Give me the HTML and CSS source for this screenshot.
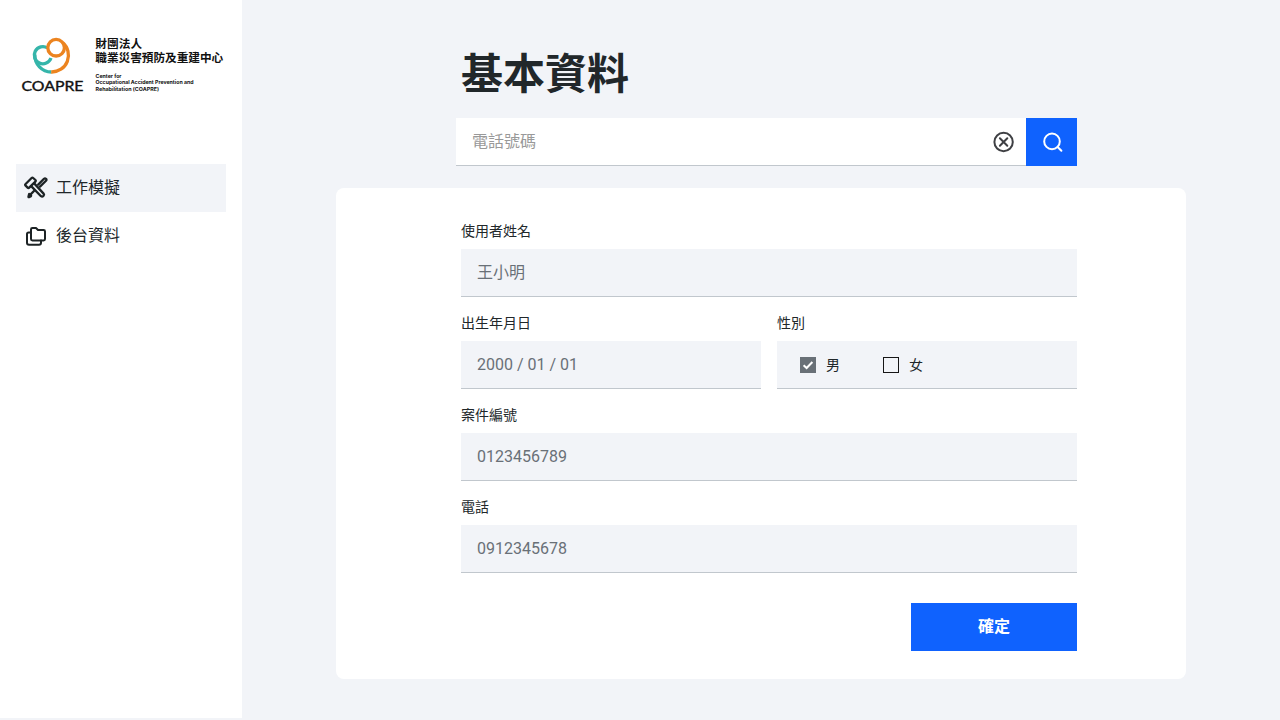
FILE: index.html
```
<!DOCTYPE html>
<html lang="zh-Hant">
<head>
    <meta charset="UTF-8">
    <meta name="viewport" content="width=device-width, initial-scale=1.0">
    <title>基本資料</title>
    <link rel="stylesheet" href="styles.css">
</head>
<body>
    <aside class="sidebar">
        <svg class="logo" width="242" height="110" viewBox="0 0 242 110">
            <g fill="none" stroke-width="3.3">
                <path class="teal" d="M47.5 47.9A8.6 8.6 0 1 0 51 58"/>
                <path class="teal" d="M34.9 54.5A16.7 16.7 0 0 0 51.4 72"/>
                <path class="orange" d="M51.2 72A16.7 16.7 0 0 0 62.6 42.6"/>
                <circle class="orange" cx="56.1" cy="47.7" r="8.3"/>
            </g>
            <text class="logo-name" x="21.5" y="91" textLength="62" lengthAdjust="spacingAndGlyphs">COAPRE</text>
            <text class="logo-zh" x="95.3" y="48.2" textLength="47">財團法人</text>
            <text class="logo-zh" x="95.3" y="62.2" textLength="128">職業災害預防及重建中心</text>
            <text class="logo-en" x="95.5" y="77.5" textLength="26" lengthAdjust="spacingAndGlyphs">Center for</text>
            <text class="logo-en" x="95.5" y="84.4" textLength="98" lengthAdjust="spacingAndGlyphs">Occupational Accident Prevention and</text>
            <text class="logo-en" x="95.5" y="91.2" textLength="63.5" lengthAdjust="spacingAndGlyphs">Rehabilitation (COAPRE)</text>
        </svg>
        <ul class="menu">
            <li class="active">
                <svg width="24" height="24" viewBox="0 0 24 24" fill="none" stroke="#1d2325" stroke-width="2.3" stroke-linejoin="round" stroke-linecap="round">
                    <path d="M1.6 8Q.8 8.8 1.6 9.6L3.6 11.6Q4.4 12.4 5.2 11.6L11.4 5.6Q12.2 4.8 11.4 4L9.2 2Q8.4 1.2 7.6 2Z"/>
                    <path d="M7.4 10.4L17 20.2Q18.2 21.2 19.4 20Q20.6 18.8 19.6 17.6L10.2 7.4"/>
                    <path d="M14.2 8.6L20 2.8Q21 1.9 22 2.8Q23 3.8 22 4.8L16 10.6"/>
                    <path d="M10.2 14.8L6.4 18.6"/>
                    <path d="M5.4 18.4L6.8 19.8L4.8 20.8Z" stroke-width="3"/>
                </svg>
                <a>工作模擬</a>
            </li>
            <li>
                <svg width="24" height="24" viewBox="0 0 24 24" fill="none" stroke="#1d2325" stroke-width="2" stroke-linejoin="round" stroke-linecap="round">
                    <path d="M7 5.4Q7 4 8.4 4H12L14 6H19.6Q21 6 21 7.4V15Q21 16.4 19.6 16.4H8.4Q7 16.4 7 15Z"/>
                    <path d="M7 8.4H4.6Q3 8.4 3 10V18.8Q3 20.8 5 20.8H15Q17 20.8 17 18.8V16.4"/>
                </svg>
                <a>後台資料</a>
            </li>
        </ul>
    </aside>

    <main>
        <h1>基本資料</h1>
        <div class="search">
            <span class="search-text">電話號碼</span>
            <svg class="clear" width="22" height="22" viewBox="0 0 22 22" fill="none" stroke="#3f4044" stroke-width="2" stroke-linecap="round">
                <circle cx="10.6" cy="11" r="9.2"/>
                <path d="M6.9 7.3L14.3 14.7M14.3 7.3L6.9 14.7"/>
            </svg>
            <button class="search-btn">
                <svg width="24" height="24" viewBox="0 0 24 24" fill="none" stroke="#fff" stroke-width="2" stroke-linecap="round">
                    <circle cx="11" cy="11.4" r="7.8"/>
                    <path d="M16.6 17L20.4 20.8"/>
                </svg>
            </button>
        </div>

        <div class="card">
            <div class="field">
                <label>使用者姓名</label>
                <div class="box name">王小明</div>
            </div>
            <div class="row">
                <div class="field">
                    <label>出生年月日</label>
                    <div class="box">2000 / 01 / 01</div>
                </div>
                <div class="field">
                    <label>性別</label>
                    <div class="box gender">
                        <span class="check checked">
                            <svg width="16" height="16" viewBox="0 0 16 16" fill="none" stroke="#fff" stroke-width="2">
                                <path d="M3.6 8.2L6.6 11L12.4 5"/>
                            </svg>
                        </span>
                        <span class="option">男</span>
                        <span class="check"></span>
                        <span class="option">女</span>
                    </div>
                </div>
            </div>
            <div class="field">
                <label>案件編號</label>
                <div class="box">0123456789</div>
            </div>
            <div class="field">
                <label>電話</label>
                <div class="box">0912345678</div>
            </div>
            <button class="submit">確定</button>
        </div>
    </main>
</body>
</html>
```
FILE: styles.css
```
* {
    margin: 0;
    padding: 0;
    box-sizing: border-box;
}
body {
    display: flex;
    height: 720px;
    overflow: hidden;
    background-color: #f2f4f8;
    color: #21272a;
    font-family: Roboto, "Noto Sans CJK TC", sans-serif;
}
button {
    border: none;
    background-color: #0f62fe;
    color: white;
    font-family: inherit;
}
.sidebar {
    width: 242px;
    height: 718px;
    background-color: white;
}
.logo {
    display: block;
}
.teal {
    stroke: #35b5aa;
}
.orange {
    stroke: #ec8420;
}
.logo-name {
    font-family: Lato, sans-serif;
    font-size: 14px;
    fill: #111;
    stroke: #111;
    stroke-width: 0.4px;
}
.logo-zh {
    font-family: "Noto Sans CJK TC", sans-serif;
    font-size: 11.7px;
    font-weight: bold;
    fill: #111;
}
.logo-en {
    font-family: Inter, sans-serif;
    font-size: 5px;
    font-weight: bold;
    fill: #111;
}
.menu {
    list-style-type: none;
    margin: 54px 16px 0 16px;
}
.menu li {
    display: flex;
    align-items: center;
    gap: 8px;
    height: 48px;
    padding: 0 8px;
    font-size: 16px;
}
.menu a {
    line-height: 24px;
}
.menu .active {
    background-color: #f2f4f8;
}
main {
    width: 850px;
    margin-left: 94px;
}
h1 {
    height: 118px;
    padding: 45px 0 0 125px;
    font-size: 42px;
    line-height: 60px;
    font-weight: bold;
}
.search {
    display: flex;
    align-items: center;
    width: 621px;
    height: 48px;
    margin-left: 120px;
    background-color: white;
    border-bottom: 1px solid #c1c7cd;
}
.search-text {
    flex: 1;
    padding: 0 0 3px 16px;
    color: #999;
    font-size: 16px;
}
.clear {
    margin-right: 11px;
}
.search-btn {
    display: flex;
    align-items: center;
    justify-content: center;
    align-self: flex-start;
    flex-shrink: 0;
    width: 51px;
    height: 48px;
    padding-left: 2px;
}
.card {
    height: 491px;
    margin-top: 22px;
    padding: 33px 109px 0 125px;
    border-radius: 8px;
    background-color: white;
}
.row {
    display: flex;
    gap: 16px;
}
.field {
    flex: 1;
    margin-bottom: 16px;
}
label {
    display: block;
    height: 28px;
    font-size: 14px;
    line-height: 20px;
}
.box {
    display: flex;
    align-items: center;
    height: 48px;
    padding: 0 16px;
    background-color: #f2f4f8;
    border-bottom: 1px solid #c1c7cd;
    color: #697077;
    font-size: 16px;
}
.name {
    padding-bottom: 3px;
}
.gender {
    padding-left: 23px;
    color: #21272a;
    font-size: 14px;
}
.check {
    width: 16px;
    height: 16px;
    border: 1px solid #161616;
}
.checked {
    border: none;
    background-color: #697077;
}
.checked svg {
    display: block;
}
.option {
    width: 57px;
    margin-left: 10px;
    padding-bottom: 2px;
}
.submit {
    display: block;
    width: 166px;
    height: 48px;
    margin: 30px 0 0 auto;
    padding-bottom: 5px;
    font-size: 16px;
    font-weight: bold;
}
```
